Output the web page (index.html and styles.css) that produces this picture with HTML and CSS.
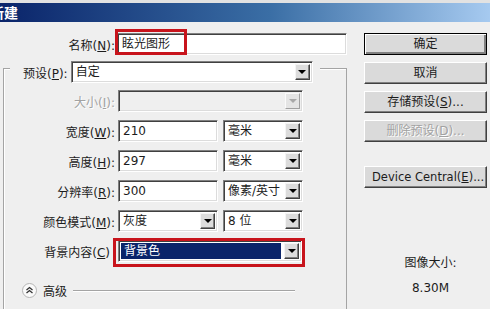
FILE: index.html
```html
<!DOCTYPE html>
<html lang="zh-CN">
<head>
  <meta charset="UTF-8" />
  <meta name="viewport" content="width=device-width, initial-scale=1.0"/>
  <title>新建</title>
  <link rel="stylesheet" href="styles.css">
</head>
<body>
  <div class="titlebar"><span>新建</span></div>
  <div class="dialog">
    <div class="main">
      <div class="row name-row">
        <label class="lbl">名称(<u>N</u>):</label>
        <div class="field name-field">眩光图形</div>
        <span class="mark name-mark"></span>
      </div>

      <div class="group">
        <div class="row preset">
          <label class="plbl">预设(<u>P</u>):</label>
          <div class="field sel preset-sel"><span class="val">自定</span><span class="arrow"></span></div>
        </div>

        <div class="row grow first">
          <label class="lbl off">大小(<u>I</u>):</label>
          <div class="field sel dis wide"><span class="val"></span><span class="arrow"></span></div>
        </div>
        <div class="row grow">
          <label class="lbl">宽度(<u>W</u>):</label>
          <div class="field num">210</div>
          <div class="field sel unit"><span class="val">毫米</span><span class="arrow"></span></div>
        </div>
        <div class="row grow">
          <label class="lbl">高度(<u>H</u>):</label>
          <div class="field num">297</div>
          <div class="field sel unit"><span class="val">毫米</span><span class="arrow"></span></div>
        </div>
        <div class="row grow">
          <label class="lbl">分辨率(<u>R</u>):</label>
          <div class="field num">300</div>
          <div class="field sel unit"><span class="val">像素/英寸</span><span class="arrow"></span></div>
        </div>
        <div class="row grow">
          <label class="lbl">颜色模式(<u>M</u>):</label>
          <div class="field sel num"><span class="val">灰度</span><span class="arrow"></span></div>
          <div class="field sel unit"><span class="val">8 位</span><span class="arrow"></span></div>
        </div>
        <div class="row grow bg-row">
          <label class="lbl bg-lbl">背景内容(<u>C</u>)</label>
          <div class="field sel bg-sel"><span class="hilite">背景色</span><span class="arrow"></span></div>
          <span class="mark bg-mark"></span>
        </div>

        <div class="advanced">
          <svg class="toggle" width="15" height="15" viewBox="0 0 15 15">
            <circle cx="7.5" cy="7.5" r="7" fill="#fafafa" stroke="#b4b4b4"/>
            <path d="M4.5 7 L7.5 4.5 L10.5 7 M4.5 10 L7.5 7.5 L10.5 10" fill="none" stroke="#333" stroke-width="1.3"/>
          </svg>
          <span class="adv-text">高级</span>
          <span class="rule"></span>
        </div>
      </div>
    </div>

    <div class="side">
      <div class="btn def">确定</div>
      <div class="btn">取消</div>
      <div class="btn">存储预设(<u>S</u>)...</div>
      <div class="btn off">删除预设(<u>D</u>)...</div>
      <div class="btn latin">Device Central(<u>E</u>)...</div>
      <div class="info">图像大小:</div>
      <div class="info size">8.30M</div>
    </div>
  </div>
</body>
</html>
```

FILE: styles.css
```css
body { margin: 0; height: 309px; background: #efefef; font-family: "DejaVu Sans", "Noto Sans CJK SC", sans-serif; font-size: 12px; color: #1c1c1c; overflow: hidden; }
u { text-decoration: underline; text-underline-offset: 1px; }

.titlebar { height: 19px; border-top: 3px solid #e2e2e2; background: linear-gradient(to right, #0a246a, #3a6ea5 55%, #a6caf0); color: #fff; font-family: "Noto Sans CJK SC", sans-serif; font-weight: bold; font-size: 14px; line-height: 19px; overflow: hidden; }
.titlebar span { display: block; margin-left: -10px; }

.dialog { display: flex; padding-top: 11px; }
.main { width: 347px; }
.side { width: 123px; margin-left: 17px; display: flex; flex-direction: column; }

.row { display: flex; align-items: center; height: 22px; position: relative; }
.lbl { width: 115px; text-align: right; flex: none; white-space: nowrap; }
.lbl.off, .btn.off { color: #a2a2a2; text-shadow: 1px 1px #fff; }

.field { height: 22px; box-sizing: border-box; background: #fff; border: 1px solid; border-color: #808080 #fff #fff #808080; box-shadow: inset 1px 1px #404040, inset -1px -1px #dcdcdc; padding-left: 4px; line-height: 20px; white-space: nowrap; flex: none; }
.name-field { width: 230px; margin-left: 2px; }

.sel { display: flex; align-items: stretch; padding: 2px 2px 2px 4px; line-height: 16px; }
.sel .val { flex: 1; overflow: hidden; }
.arrow { width: 15px; flex: none; box-sizing: border-box; background: #dcdcdc; border: 1px solid; border-color: #f4f4f4 #404040 #404040 #f4f4f4; box-shadow: inset -1px -1px #808080; display: flex; align-items: center; justify-content: center; }
.arrow::after { content: ""; border-left: 4px solid transparent; border-right: 4px solid transparent; border-top: 4px solid #000; }
.dis { background: #efefef; }
.dis .arrow { background: #e4e4e4; border-color: #fafafa #a0a0a0 #a0a0a0 #fafafa; box-shadow: none; }
.dis .arrow::after { border-top-color: #a8a8a8; }

.group { margin: 13px 0 0 3px; width: 342px; height: 240px; border: 1px solid #a4a4a4; border-bottom: none; box-shadow: inset 1px 1px #fff; }
.preset { width: fit-content; margin: -8px 0 0 6px; padding: 0 7px 0 13px; background: #efefef; }
.plbl { margin-right: 3px; white-space: nowrap; }
.preset-sel { width: 242px; }

.grow { margin-top: 8px; }
.grow.first { margin-top: 7px; }
.grow .lbl { width: 111px; }
.grow .bg-lbl { width: 106px; padding-right: 5px; }
.grow .field { margin-left: 3px; }
.wide { width: 185px; }
.num { width: 100px; }
.grow .unit { width: 80px; margin-left: 5px; }
.bg-sel { width: 184px; padding-left: 2px; }
.hilite { flex: 1; margin-right: 3px; background: #0a246a; color: #fff; padding-left: 3px; }

.mark { position: absolute; border: 3px solid #c8141c; box-sizing: border-box; pointer-events: none; }
.name-mark { left: 115px; top: -4px; width: 72px; height: 26px; }
.bg-mark { left: 109px; top: -2px; width: 192px; height: 29px; }

.advanced { display: flex; align-items: center; height: 15px; margin-top: 21px; padding-left: 18px; }
.toggle { flex: none; }
.adv-text { margin-left: 6px; }
.rule { width: 222px; height: 1px; margin-left: 6px; background: #a4a4a4; box-shadow: 0 1px #fff; }

.btn { height: 22px; box-sizing: border-box; margin-top: 7px; background: #dadada; border: 1px solid; border-color: #fff #404040 #404040 #fff; box-shadow: inset -1px -1px #808080; text-align: center; line-height: 20px; white-space: nowrap; overflow: hidden; }
.btn.def { margin-top: 0; border-color: #000; box-shadow: inset 1px 1px #fff, inset -2px -2px #808080; }
.btn.latin { margin-top: 24px; font-size: 11.5px; text-align: left; padding-left: 7px; }
.info { text-align: center; padding-left: 10px; line-height: 16px; margin-top: 67px; }
.info.size { margin-top: 9px; }
```
